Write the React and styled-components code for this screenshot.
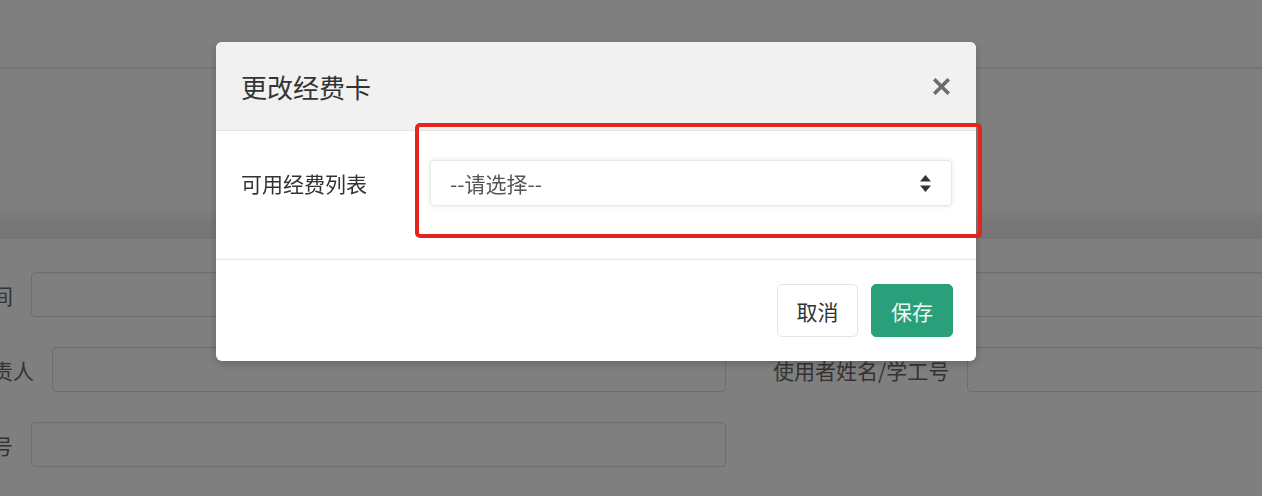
import React from "react"
import styled, { createGlobalStyle } from "styled-components"

const GlobalStyle = createGlobalStyle`
  html, body {
    margin: 0;
    padding: 0;
    height: 496px;
    overflow: hidden;
    background: #fff;
    font-family: "Noto Sans CJK SC", "Noto Sans", sans-serif;
  }
`

const Page = styled.div`
  width: 1262px;
  height: 496px;
  overflow: hidden;
`

const TopBar = styled.div`
  height: 67px;
  border-bottom: 2px solid #e9e9e9;
`

const PanelHeading = styled.div`
  margin-top: 141px;
  height: 29px;
  background: linear-gradient(to bottom, #fbfbfb 0%, #efefef 50%, #ebebeb 100%);
`

const Form = styled.div`
  margin: 33px 0 0 -71px;
  width: 1641px;
  display: grid;
  grid-template-columns: 797px 797px;
  column-gap: 47px;
  row-gap: 30px;
`

const Field = styled.div`
  display: flex;
  align-items: center;
  gap: 18px;
`

const Label = styled.label`
  font-size: 21px;
  color: #666;
  white-space: nowrap;
`

const Input = styled.div`
  flex: 1;
  height: 45px;
  box-sizing: border-box;
  border: 1px solid #dcdcdc;
  border-radius: 4px;
  box-shadow: inset 0 1px 2px rgba(0, 0, 0, 0.06);
  background: #fff;
`

const Overlay = styled.div`
  position: fixed;
  inset: 0;
  background: rgba(0, 0, 0, 0.5);
`

const Dialog = styled.div`
  position: relative;
  margin: 42px 0 0 216px;
  width: 760px;
  height: 319px;
  background: #fff;
  border-radius: 6px;
  box-shadow: 0 3px 9px rgba(0, 0, 0, 0.2);
  display: flex;
  flex-direction: column;
`

const Header = styled.div`
  height: 89px;
  flex: none;
  box-sizing: border-box;
  padding: 0 26px 0 25px;
  display: flex;
  align-items: center;
  justify-content: space-between;
  background: #f1f1f1;
  border-bottom: 1px solid #e4e4e4;
  border-radius: 6px 6px 0 0;
`

const Title = styled.h4`
  margin: 0;
  font-size: 26px;
  font-weight: 400;
  color: #333;
`

const Close = styled.button`
  border: 0;
  background: none;
  padding: 0;
  width: 17px;
  height: 17px;
  display: flex;
  cursor: pointer;
`

const Body = styled.div`
  height: 129px;
  flex: none;
  box-sizing: border-box;
  padding: 29px 24px 0 25px;
  display: flex;
  align-items: flex-start;
  border-bottom: 1px solid #e6e6e6;
`

const BodyLabel = styled.label`
  width: 189px;
  flex: none;
  height: 46px;
  line-height: 46px;
  font-size: 21px;
  color: #333;
`

const Select = styled.div`
  flex: 1;
  height: 46px;
  box-sizing: border-box;
  padding: 0 20px 0 19px;
  display: flex;
  align-items: center;
  justify-content: space-between;
  border: 1px solid #e1ebe3;
  border-radius: 4px;
  box-shadow: 0 0 4px rgba(120, 170, 130, 0.25);
  font-size: 21px;
  color: #555;
`

const Highlight = styled.div`
  position: absolute;
  left: 199px;
  top: 81px;
  width: 567px;
  height: 115px;
  box-sizing: border-box;
  border: 4px solid #e3241d;
  border-radius: 5px;
  pointer-events: none;
`

const Footer = styled.div`
  flex: 1;
  padding: 24px 23px 0 0;
  display: flex;
  justify-content: flex-end;
  align-items: flex-start;
  gap: 13px;
`

const Button = styled.button`
  height: 53px;
  width: ${props => props.w}px;
  box-sizing: border-box;
  border-radius: 5px;
  font-family: inherit;
  font-size: 21px;
  cursor: pointer;
  border: 1px solid ${props => (props.primary ? "#29a079" : "#e4e4e4")};
  background: ${props => (props.primary ? "#29a079" : "#fff")};
  color: ${props => (props.primary ? "#eef8f3" : "#333")};
`

const SortIcon = () => (
  <svg width="11" height="17" viewBox="0 0 11 17">
    <path d="M5.5 0 L11 6.5 H0 Z" fill="#333" />
    <path d="M0 10.5 H11 L5.5 17 Z" fill="#333" />
  </svg>
)

const CloseIcon = () => (
  <svg width="17" height="17" viewBox="0 0 17 17">
    <path
      d="M2.5 2.5 L14.5 14.5 M14.5 2.5 L2.5 14.5"
      stroke="#6c6c6c"
      strokeWidth="3.6"
      strokeLinecap="square"
    />
  </svg>
)

export default function App() {
  return (
    <>
      <GlobalStyle />
      <Page>
        <TopBar />
        <PanelHeading />
        <Form>
          <Field>
            <Label>申请时间</Label>
            <Input />
          </Field>
          <Field>
            <Label>经费卡有效期截止</Label>
            <Input />
          </Field>
          <Field>
            <Label>经费负责人</Label>
            <Input />
          </Field>
          <Field>
            <Label>使用者姓名/学工号</Label>
            <Input />
          </Field>
          <Field>
            <Label>经费卡号</Label>
            <Input />
          </Field>
        </Form>
      </Page>
      <Overlay>
        <Dialog>
          <Header>
            <Title>更改经费卡</Title>
            <Close aria-label="关闭">
              <CloseIcon />
            </Close>
          </Header>
          <Body>
            <BodyLabel>可用经费列表</BodyLabel>
            <Select>
              <span>--请选择--</span>
              <SortIcon />
            </Select>
          </Body>
          <Footer>
            <Button w={81}>取消</Button>
            <Button w={82} primary>
              保存
            </Button>
          </Footer>
          <Highlight />
        </Dialog>
      </Overlay>
    </>
  )
}
